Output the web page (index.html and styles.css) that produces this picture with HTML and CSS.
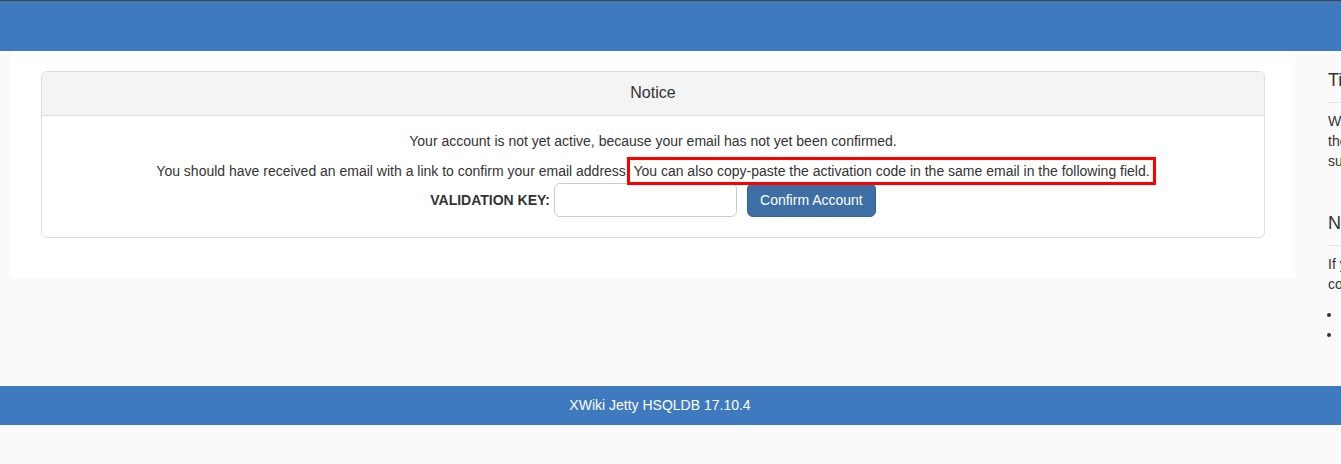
FILE: index.html
```html
<!DOCTYPE html>
<html lang="en">
<head>
<meta charset="utf-8">
<title>Notice</title>
<link rel="stylesheet" href="styles.css">
</head>
<body>
<header class="topbar"></header>
<div class="layout">
  <main class="main">
    <section class="panel">
      <div class="panel-heading">Notice</div>
      <div class="panel-body">
        <p>Your account is not yet active, because your email has not yet been confirmed.</p>
        <p>You should have received an email with a link to confirm your email address. <span class="highlight">You can also copy-paste the activation code in the same email in the following field.</span></p>
        <form class="validate">
          <label class="key-label" for="key">VALIDATION KEY:</label>
          <input class="key-input" id="key" type="text">
          <button class="btn-confirm" type="button">Confirm Account</button>
        </form>
      </div>
    </section>
  </main>
  <aside class="sidebar">
    <h2 class="side-title">Tips</h2>
    <p class="side-text">Want to know more about<br>the wiki? Browse the help pages,<br>such as the user guide.</p>
    <h2 class="side-title second">Need help?</h2>
    <p class="side-text">If you need help with XWiki you<br>contact the following:</p>
    <ul class="side-list">
      <li>Community Support</li>
      <li>Commercial Support</li>
    </ul>
  </aside>
</div>
<footer class="footer">XWiki Jetty HSQLDB 17.10.4</footer>
</body>
</html>
```
FILE: styles.css
```css
html, body {
  margin: 0;
  padding: 0;
}
body {
  background: #fafafa;
  font-family: "Liberation Sans", Arial, sans-serif;
  font-size: 14px;
  line-height: 20px;
  color: #333;
  overflow-x: hidden;
}
.topbar {
  height: 50px;
  border-top: 1px solid #3e4448;
  background: #3e7abd;
}
.layout {
  display: flex;
  align-items: flex-start;
  padding-left: 11px;
}
.main {
  flex: 0 0 auto;
  width: 1224px;
  background: #fff;
  padding: 20px 30px 40px;
}
.panel {
  border: 1px solid #ddd;
  border-radius: 6px;
  overflow: hidden;
}
.panel-heading {
  background: #f4f4f4;
  border-bottom: 1px solid #ddd;
  padding: 10px 15px 11px;
  line-height: 22px;
  font-size: 16px;
  text-align: center;
}
.panel-body {
  padding: 15px 15px 20px;
  text-align: center;
}
.panel-body p {
  margin: 0 0 10px;
}
.panel-body p + p {
  margin-bottom: 2px;
}
.highlight {
  outline: 3px solid #f00;
  outline-offset: 3px;
}
.validate {
  display: flex;
  justify-content: center;
  align-items: center;
  margin: 0;
}
.key-label {
  font-weight: bold;
  margin-right: 4px;
}
.key-input {
  box-sizing: border-box;
  width: 183px;
  height: 34px;
  border: 1px solid #ccc;
  border-radius: 6px;
  margin: 0 10px 0 0;
  padding: 6px 10px;
  font: inherit;
}
.btn-confirm {
  box-sizing: border-box;
  height: 34px;
  background: #3d6fa6;
  border: 1px solid #35649a;
  border-radius: 6px;
  color: #fff;
  font-family: "Liberation Sans", Arial, sans-serif;
  font-size: 14px;
  padding: 6px 12px;
}
.sidebar {
  flex: 0 0 auto;
  width: 250px;
  padding: 0 0 32px 33px;
}
.side-title {
  margin: 19px 0 0;
  font-size: 18px;
  font-weight: normal;
  line-height: 20px;
  padding-bottom: 12px;
  border-bottom: 1px solid #e5e5e5;
}
.side-title.second {
  margin-top: 42px;
}
.side-text {
  margin: 8px 0 10px;
}
.side-list {
  margin: 0 0 10px;
  padding-left: 14px;
}
.footer {
  background: #3e7abd;
  color: #fff;
  text-align: center;
  height: 39px;
  line-height: 39px;
  font-size: 14px;
  padding-right: 21px;
}
```
